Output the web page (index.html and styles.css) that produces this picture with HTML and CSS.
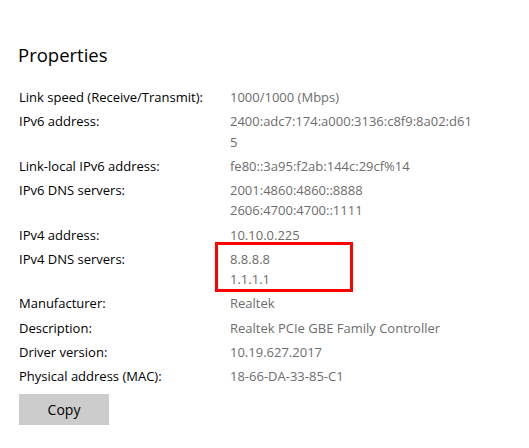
FILE: index.html
```html
<!DOCTYPE html>
<html lang="en">

<head>
    <meta charset="UTF-8">
    <meta name="viewport" content="width=device-width, initial-scale=1.0">
    <title>Properties</title>
    <link rel="stylesheet" href="styles.css">
</head>

<body>
    <div class="page">
        <h2 class="title">Properties</h2>
        <dl class="props">
            <dt>Link speed (Receive/Transmit):</dt>
            <dd>1000/1000 (Mbps)</dd>
            <dt>IPv6 address:</dt>
            <dd>2400:adc7:174:a000:3136:c8f9:8a02:d61<br>5</dd>
            <dt>Link-local IPv6 address:</dt>
            <dd>fe80::3a95:f2ab:144c:29cf%14</dd>
            <dt>IPv6 DNS servers:</dt>
            <dd>2001:4860:4860::8888<br>2606:4700:4700::1111</dd>
            <dt>IPv4 address:</dt>
            <dd>10.10.0.225</dd>
            <dt>IPv4 DNS servers:</dt>
            <dd class="marked">8.8.8.8<br>1.1.1.1<span class="mark"></span></dd>
            <dt>Manufacturer:</dt>
            <dd>Realtek</dd>
            <dt>Description:</dt>
            <dd>Realtek PCIe GBE Family Controller</dd>
            <dt>Driver version:</dt>
            <dd>10.19.627.2017</dd>
            <dt>Physical address (MAC):</dt>
            <dd>18-66-DA-33-85-C1</dd>
        </dl>
        <button class="copy">Copy</button>
    </div>
</body>

</html>
```

FILE: styles.css
```css
* {
    padding: 0;
    margin: 0;
    border: 0;
}

body {
    background: #fff;
    font-family: "Open Sans", "Noto Sans", sans-serif;
    color: #000;
}

.page {
    padding: 38px 0 0 19px;
}

.title {
    font-size: 18.5px;
    font-weight: 400;
    line-height: 34px;
    margin-left: -1px;
    margin-bottom: 15px;
}

.props {
    display: grid;
    grid-template-columns: 211px 240px;
    row-gap: 4px;
    font-size: 13px;
    line-height: 20.25px;
}

.props dt {
    color: #000;
}

.props dd {
    color: #6d6d6d;
}

/* red frame drawn over the DNS values */
.marked {
    position: relative;
}

.mark {
    position: absolute;
    left: -15px;
    top: -7px;
    width: 132px;
    height: 44px;
    border: 3px solid #f00;
}

.copy {
    margin-top: 8px;
    width: 90px;
    height: 31px;
    background: #ccc;
    font-family: inherit;
    font-size: 14px;
    color: #000;
}
```
